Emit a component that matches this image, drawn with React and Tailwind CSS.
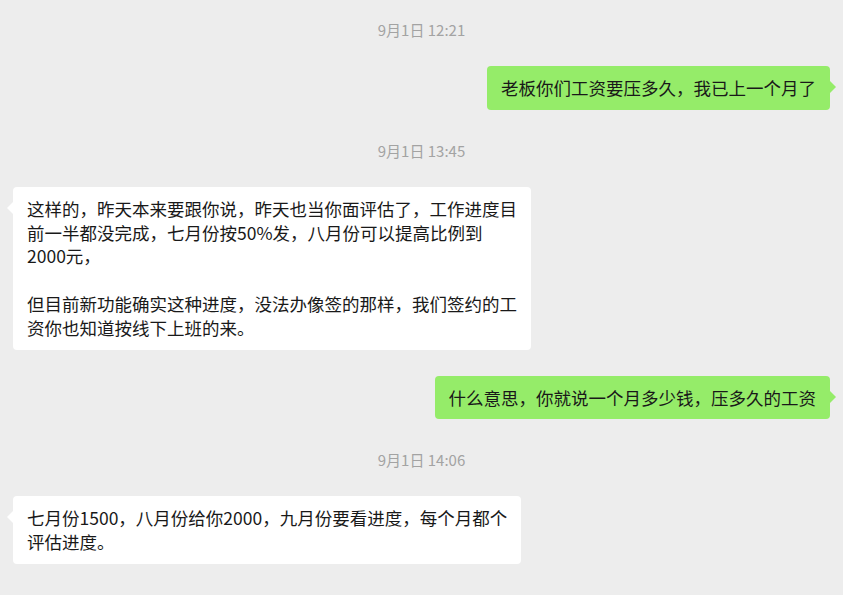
import React from 'react';

const FONT = { fontFamily: '"Microsoft YaHei", "Noto Sans CJK SC", "Noto Sans", sans-serif' };

const Time = ({ children, first = false }) => (
  <div className={`flex h-5 items-center justify-center text-[15px] text-[#a3a3a3] ${first ? '' : 'mt-[5px]'}`}>
    {children}
  </div>
);

const Bubble = ({ mine = false, lines }) => (
  <div className={`flex ${mine ? 'justify-end' : 'justify-start'}`}>
    <div
      className={`relative rounded-[4px] px-[14px] py-[10px] text-[17.5px] leading-[23.8px] text-[#191919] ${
        mine ? 'bg-[#95ec69]' : 'bg-white'
      }`}
    >
      {/* tail */}
      <span
        className={`absolute top-[15px] h-0 w-0 border-y-[6px] border-y-transparent ${
          mine
            ? 'right-[-6px] border-l-[6px] border-l-[#95ec69]'
            : 'left-[-6px] border-r-[6px] border-r-white'
        }`}
      ></span>
      {lines.map((line, i) => (
        <div key={i} className="whitespace-nowrap">
          {line || '\u00a0'}
        </div>
      ))}
    </div>
  </div>
);

export default function App() {
  return (
    <div className="min-h-[595px] w-full bg-[#ededed] px-[13px] pt-[20px] pb-6" style={FONT}>
      <div className="flex flex-col gap-[26px]">
        <Time first>9月1日 12:21</Time>
        <Bubble mine lines={['老板你们工资要压多久，我已上一个月了']} />

        <Time>9月1日 13:45</Time>
        <Bubble
          lines={[
            '这样的，昨天本来要跟你说，昨天也当你面评估了，工作进度目',
            '前一半都没完成，七月份按50%发，八月份可以提高比例到',
            '2000元，',
            '',
            '但目前新功能确实这种进度，没法办像签的那样，我们签约的工',
            '资你也知道按线下上班的来。',
          ]}
        />
        <Bubble mine lines={['什么意思，你就说一个月多少钱，压多久的工资']} />

        <Time>9月1日 14:06</Time>
        <Bubble
          lines={[
            '七月份1500，八月份给你2000，九月份要看进度，每个月都个',
            '评估进度。',
          ]}
        />
      </div>
    </div>
  );
}
